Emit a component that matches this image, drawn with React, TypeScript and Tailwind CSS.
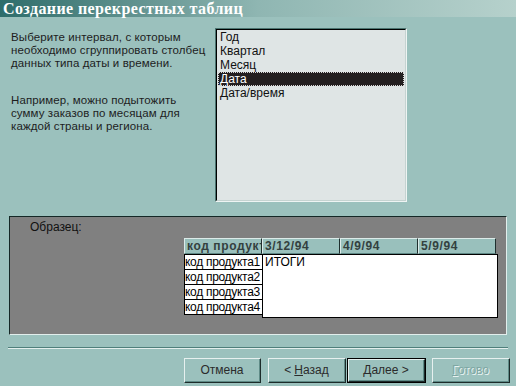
import React from "react";

const font = { fontFamily: '"Liberation Sans", Arial, sans-serif' };

const items = ["Год", "Квартал", "Месяц", "Дата", "Дата/время"];
const rows = ["код продукта1", "код продукта2", "код продукта3", "код продукта4"];
const dates = ["3/12/94", "4/9/94", "5/9/94"];

const HeaderCell: React.FC<{ label: string }> = ({ label }) => (
  <div className="w-[78px] h-[16px] bg-[#99c0bc] border-t border-l border-t-[#dcebe9] border-l-[#dcebe9] border-r border-b border-r-[#1f2f2e] border-b-[#5d8784] overflow-hidden whitespace-nowrap pl-[2px] text-[12px] leading-[14px] font-bold tracking-[0.6px] text-[#33413f]">
    {label}
  </div>
);

const Button: React.FC<{ children: React.ReactNode; def?: boolean; className?: string }> = ({
  children,
  def,
  className,
}) => (
  <div className={`${def ? "border border-black" : ""} ${className ?? ""}`}>
    <div className="h-full border-t border-l border-t-[#e6f0ef] border-l-[#e6f0ef] border-r border-b border-r-[#1c2b2a] border-b-[#1c2b2a]">
      <div className="h-full flex items-center justify-center border-r border-b border-r-[#5f8b87] border-b-[#5f8b87] text-[12px] text-[#2b2b2b]">
        {children}
      </div>
    </div>
  </div>
);

export default function App() {
  return (
    <div className="w-[516px] h-[386px] bg-[#9bc1bd] flex flex-col overflow-hidden" style={font}>
      {/* title */}
      <div className="h-[17px] bg-gradient-to-r from-[#2d6d6b] via-[#8fb6b2] to-[#b6d1cc] text-white font-bold text-[16px] leading-[17px] pl-[3px] tracking-[0.4px] whitespace-nowrap font-[family-name:Liberation_Serif,serif]">
        Создание перекрестных таблиц
      </div>

      <div className="flex h-[199px]">
        <div className="w-[215px] pl-[11px] pt-[14px] text-[11.5px] leading-[13px] tracking-[0.1px] text-[#1d1d1d]">
          <p>Выберите интервал, с которым<br />необходимо сгруппировать столбец<br />данных типа даты и времени.</p>
          <p className="mt-[24px]">Например, можно подытожить<br />сумму заказов по месяцам для<br />каждой страны и региона.</p>
        </div>
        <div className="mt-[11px] w-[192px] h-[174px] border border-t-[#4b7470] border-l-[#4b7470] border-r-[#eef4f3] border-b-[#eef4f3]">
          <div className="h-full bg-[#dfe5e5] border border-t-black border-l-black border-r-[#c5d3d1] border-b-[#c5d3d1] pl-[1px] pr-[1px]">
            {items.map((it) => (
              <div
                key={it}
                className={`h-[14px] leading-[14px] text-[12px] pl-[2px] ${
                  it === "Дата" ? "bg-[#231f20] text-white outline-1 outline-dotted outline-[#d8d8d8] -outline-offset-1" : "text-[#111]"
                }`}
              >
                {it}
              </div>
            ))}
          </div>
        </div>
      </div>

      {/* sample panel */}
      <div className="ml-[9px] w-[498px] h-[119px] bg-[#808080] border border-t-[#142826] border-l-[#142826] border-r-[#e2eeec] border-b-[#e2eeec]">
        <div className="pl-[20px] pt-[3px] text-[12px] leading-[14px] text-[#111]">Образец:</div>
        <div className="ml-[174px] mt-[4px] flex flex-col w-[314px]">
          <div className="flex">
            <HeaderCell label="код продукт" />
            {dates.map((d) => (
              <HeaderCell key={d} label={d} />
            ))}
          </div>
          <div className="flex">
            <div className="flex flex-col w-[79px]">
              {rows.map((r) => (
                <div key={r} className="h-[16px] bg-white border border-black -mt-px first:mt-0 text-[12px] leading-[14px] tracking-[-0.3px] text-black whitespace-nowrap overflow-hidden">
                  {r}
                </div>
              ))}
            </div>
            <div className="-ml-px w-[236px] h-[64px] bg-white border border-black pl-[2px] text-[12px] leading-[14px] text-black">
              ИТОГИ
            </div>
          </div>
        </div>
      </div>

      {/* separator */}
      <div className="mt-[12px] ml-[8px] w-[500px] border-t border-t-[#4f7f7b] border-b border-b-[#e3efed]" />

      {/* buttons */}
      <div className="mt-[9px] flex h-[25px]">
        <Button className="ml-[184px] w-[77px]">Отмена</Button>
        <Button className="ml-[7px] w-[78px]">
          &lt; <span className="underline ml-[3px]">Н</span>азад
        </Button>
        <Button def className="ml-[1px] w-[79px]">
          <span className="underline">Д</span>алее &gt;
        </Button>
        <Button className="ml-[6px] w-[78px]">
          <span className="text-[#7ea7a3] [text-shadow:1px_1px_0_#e8f2f1]">
            <span className="underline">Г</span>отово
          </span>
        </Button>
      </div>
    </div>
  );
}
